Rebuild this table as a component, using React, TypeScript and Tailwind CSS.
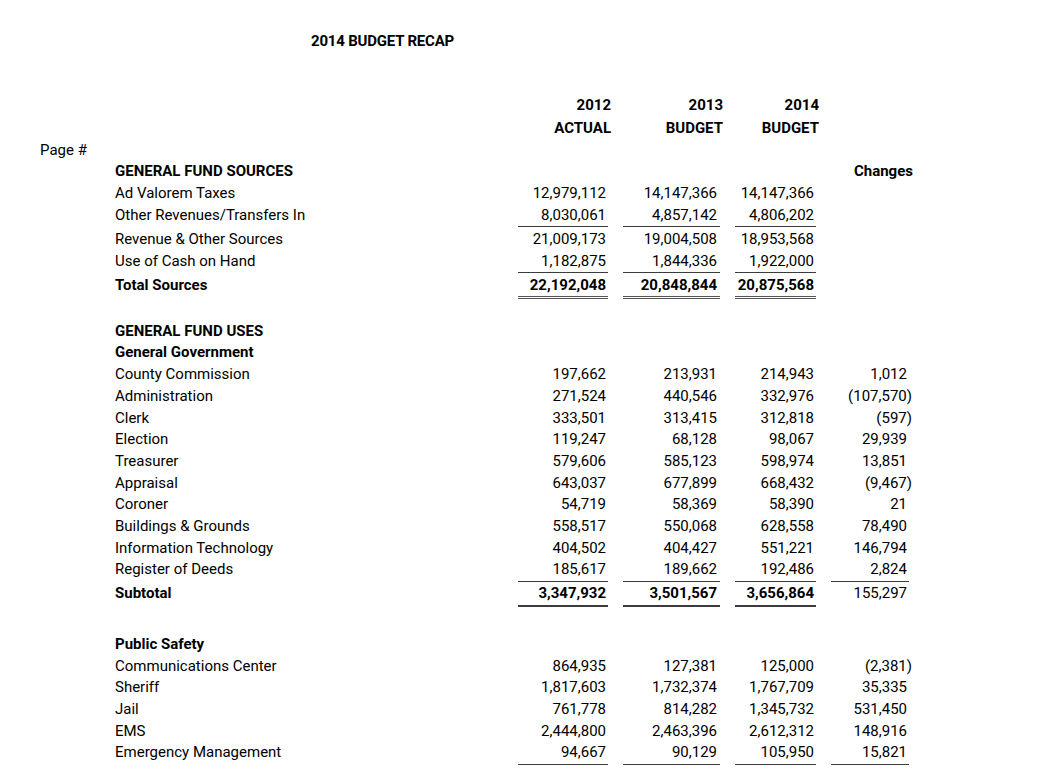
import clsx from "clsx";

type Line = "single" | "double" | "thick";

type RowData = {
	label: string;
	bold?: boolean;
	values?: string[];
	change?: string;
	line?: Line;
	lineChange?: boolean;
	boldValues?: boolean;
	gap?: boolean;
};

const SOURCES: RowData[] = [
	{ label: "Ad Valorem Taxes", values: ["12,979,112", "14,147,366", "14,147,366"] },
	{ label: "Other Revenues/Transfers In", values: ["8,030,061", "4,857,142", "4,806,202"], line: "single" },
	{ label: "Revenue & Other Sources", values: ["21,009,173", "19,004,508", "18,953,568"], gap: true },
	{ label: "Use of Cash on Hand", values: ["1,182,875", "1,844,336", "1,922,000"], line: "single" },
	{ label: "Total Sources", bold: true, boldValues: true, values: ["22,192,048", "20,848,844", "20,875,568"], line: "double", gap: true },
];

const GENERAL_GOVERNMENT: RowData[] = [
	{ label: "County Commission", values: ["197,662", "213,931", "214,943"], change: "1,012" },
	{ label: "Administration", values: ["271,524", "440,546", "332,976"], change: "(107,570)" },
	{ label: "Clerk", values: ["333,501", "313,415", "312,818"], change: "(597)" },
	{ label: "Election", values: ["119,247", "68,128", "98,067"], change: "29,939" },
	{ label: "Treasurer", values: ["579,606", "585,123", "598,974"], change: "13,851" },
	{ label: "Appraisal", values: ["643,037", "677,899", "668,432"], change: "(9,467)" },
	{ label: "Coroner", values: ["54,719", "58,369", "58,390"], change: "21" },
	{ label: "Buildings & Grounds", values: ["558,517", "550,068", "628,558"], change: "78,490" },
	{ label: "Information Technology", values: ["404,502", "404,427", "551,221"], change: "146,794" },
	{ label: "Register of Deeds", values: ["185,617", "189,662", "192,486"], change: "2,824", line: "single", lineChange: true },
	{ label: "Subtotal", bold: true, boldValues: true, values: ["3,347,932", "3,501,567", "3,656,864"], change: "155,297", line: "thick", gap: true },
];

const PUBLIC_SAFETY: RowData[] = [
	{ label: "Communications Center", values: ["864,935", "127,381", "125,000"], change: "(2,381)" },
	{ label: "Sheriff", values: ["1,817,603", "1,732,374", "1,767,709"], change: "35,335" },
	{ label: "Jail", values: ["761,778", "814,282", "1,345,732"], change: "531,450" },
	{ label: "EMS", values: ["2,444,800", "2,463,396", "2,612,312"], change: "148,916" },
	{ label: "Emergency Management", values: ["94,667", "90,129", "105,950"], change: "15,821", line: "single", lineChange: true },
];

const GRID = "grid grid-cols-[503px_90px_97px_81px_78px] gap-x-[15px]";

const LINE_CLASS: Record<Line, string> = {
	single: "border-b border-[#3c3c3c]",
	double: "border-b-[3px] border-double border-[#555]",
	thick: "border-b-2 border-[#3c3c3c]",
};

function Row({ row, wide }: { row: RowData; wide?: boolean }) {
	const vals = row.values ?? ["", "", ""];
	return (
		<div className={clsx(GRID, wide ? "leading-[22px]" : "leading-[21.7px]", row.gap && "mt-[1px]")}>
			<div className={clsx("pl-[115px]", row.bold && "font-bold")}>{row.label}</div>
			{vals.map((v, i) => (
				<div
					key={i}
					className={clsx(
						"text-right",
						i === 1 ? "pr-[3px]" : "pr-[2px]",
						row.boldValues && "font-bold",
						row.line && LINE_CLASS[row.line],
					)}
				>
					{v}
				</div>
			))}
			<div className={clsx("text-right pr-[2px]", row.lineChange && row.line && LINE_CLASS[row.line])}>
				{row.change &&
					(row.change.startsWith("(") ? (
						<span className="inline-block mr-[-5px]">{row.change}</span>
					) : (
						row.change
					))}
			</div>
		</div>
	);
}

function Header({ label }: { label: string }) {
	return (
		<div className={clsx(GRID, "font-bold leading-[21.7px]")}>
			<div className="pl-[115px]">{label}</div>
		</div>
	);
}

export default function App() {
	return (
		<div className="w-[1049px] h-[781px] overflow-hidden bg-white text-black text-[15px] font-['Roboto','Lato',sans-serif]">
			<div className="pt-[30px] pl-[311px] font-bold leading-[22px] tracking-[-0.2px]">2014 BUDGET RECAP</div>

			{/* Column headers */}
			<div className="mt-[42px] font-bold">
				{[
					["2012", "2013", "2014"],
					["ACTUAL", "BUDGET", "BUDGET"],
				].map((line, r) => (
					<div key={r} className={clsx(GRID, "leading-[23px]")}>
						<div />
						{line.map((t, i) => (
							<div key={i} className="text-right mr-[-3px]">
								{t}
							</div>
						))}
						<div />
					</div>
				))}
			</div>

			<div className="pl-[40px] leading-[21px]">Page #</div>

			{/* Sources */}
			<div className={clsx(GRID, "font-bold leading-[21.7px]")}>
				<div className="pl-[115px]">GENERAL FUND SOURCES</div>
				<div />
				<div />
				<div />
				<div className="text-right mr-[-4px]">Changes</div>
			</div>
			<div className="-mt-[1px]">
				{SOURCES.map((r) => (
					<Row key={r.label} row={r} wide />
				))}
			</div>

			{/* Uses */}
			<div className="mt-[22px]">
				<Header label="GENERAL FUND USES" />
				<Header label="General Government" />
				{GENERAL_GOVERNMENT.map((r) => (
					<Row key={r.label} row={r} />
				))}
			</div>

			<div className="mt-[27px]">
				<Header label="Public Safety" />
				{PUBLIC_SAFETY.map((r) => (
					<Row key={r.label} row={r} />
				))}
			</div>
		</div>
	);
}
